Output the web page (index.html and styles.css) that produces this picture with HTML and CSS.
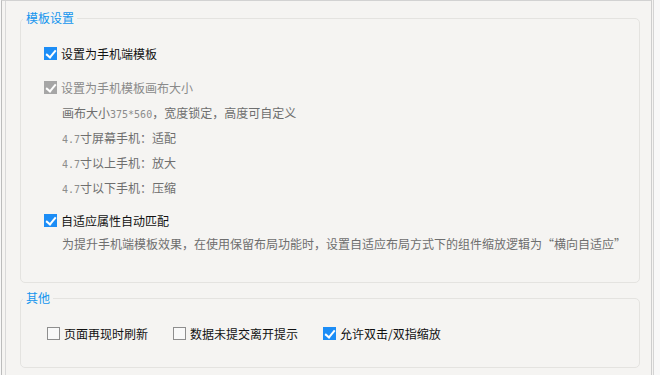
FILE: index.html
```html
<!DOCTYPE html>
<html lang="zh-CN">
<head>
    <meta charset="UTF-8">
    <title>模板设置</title>
    <link rel="stylesheet" href="styles.css">
</head>
<body>
    <div class="frame">
        <fieldset class="group">
            <legend>模板设置</legend>
            <div class="group-body">
                <label class="check"><input type="checkbox" checked> 设置为手机端模板</label>

                <label class="check check-disabled"><input type="checkbox" checked disabled> 设置为手机模板画布大小</label>
                <div class="notes">
                    <div class="note">画布大小<span class="num">375*560</span>，宽度锁定，高度可自定义</div>
                    <div class="note"><span class="num">4.7</span>寸屏幕手机：适配</div>
                    <div class="note"><span class="num">4.7</span>寸以上手机：放大</div>
                    <div class="note"><span class="num">4.7</span>寸以下手机：压缩</div>
                </div>

                <label class="check check-gap"><input type="checkbox" checked> 自适应属性自动匹配</label>
                <div class="desc">为提升手机端模板效果，在使用保留布局功能时，设置自适应布局方式下的组件缩放逻辑为“横向自适应”</div>
            </div>
        </fieldset>

        <fieldset class="group group-other">
            <legend>其他</legend>
            <div class="options">
                <label class="check"><input type="checkbox"> 页面再现时刷新</label>
                <label class="check"><input type="checkbox"> 数据未提交离开提示</label>
                <label class="check"><input type="checkbox" checked> 允许双击/双指缩放</label>
            </div>
        </fieldset>
    </div>
    <div class="rail"></div>
</body>
</html>
```

FILE: styles.css
```css
* {
    box-sizing: border-box;
}

body {
    margin: 0;
    width: 660px;
    height: 375px;
    display: flex;
    background: #f8f8f8;
    font-family: "Noto Sans CJK SC", "Noto Sans", sans-serif;
    font-size: 12px;
    color: #111;
    overflow: hidden;
}

.frame {
    margin-left: 1px;
    width: 651px;
    height: 375px;
    padding: 9px 11px 0 18px;
    background: #f5f4f2;
    border-top: 1px solid #d2d2d2;
    border-left: 1px solid #bcbcbc;
    border-right: 1px solid #cdcdcd;
    box-shadow: inset 3px 0 0 #f5f4f2, inset 4px 0 0 #d9d9d9;
}

.rail {
    width: 2px;
    border-right: 1px solid #d4d4d4;
    background: #f5f4f2;
}

/* group boxes */
.group {
    margin: 0;
    padding: 15px 0 27px;
    border: 1px solid #e4e3e0;
    border-radius: 5px;
    min-width: 0;
}

.group legend {
    margin-left: 2px;
    padding: 0 3px;
    height: 16px;
    line-height: 16px;
    color: #1395ee;
}

.group-other {
    margin-top: 7px;
    padding: 15px 0 21px;
}

.group-body {
    padding-left: 23px;
    display: flex;
    flex-direction: column;
}

/* checkboxes */
.check {
    display: flex;
    align-items: center;
    gap: 4px;
    height: 25px;
    white-space: nowrap;
}

.check input {
    appearance: none;
    -webkit-appearance: none;
    margin: 0;
    width: 13px;
    height: 13px;
    border: 1px solid #8e8e8e;
    background: #f9f9f9;
    position: relative;
    flex: none;
}

.check input:checked {
    background: #1c8df6;
    border-color: #1c8df6;
}

.check input:checked::after {
    content: '';
    position: absolute;
    left: 3px;
    top: 0px;
    width: 4px;
    height: 8px;
    border-right: 2px solid #fff;
    border-bottom: 2px solid #fff;
    transform: rotate(40deg);
}

.check-disabled {
    margin-top: 9px;
    color: #8a8a8a;
}

.check-disabled input:checked {
    background: #a6a6a6;
    border-color: #a6a6a6;
}

.check-gap {
    margin-top: 8px;
}

/* hint lines */
.notes {
    padding-left: 18px;
}

.note {
    height: 25px;
    line-height: 25px;
    color: #6e6e6e;
    overflow: hidden;
}

.num {
    font-family: "DejaVu Sans Mono", "Liberation Mono", monospace;
    font-size: 10px;
    line-height: 1;
    color: #8c8c8c;
}

.desc {
    padding-left: 18px;
    height: 22px;
    line-height: 22px;
    color: #6e6e6e;
    white-space: nowrap;
}

/* other */
.options {
    padding-left: 26px;
    display: flex;
    gap: 25px;
}
```
